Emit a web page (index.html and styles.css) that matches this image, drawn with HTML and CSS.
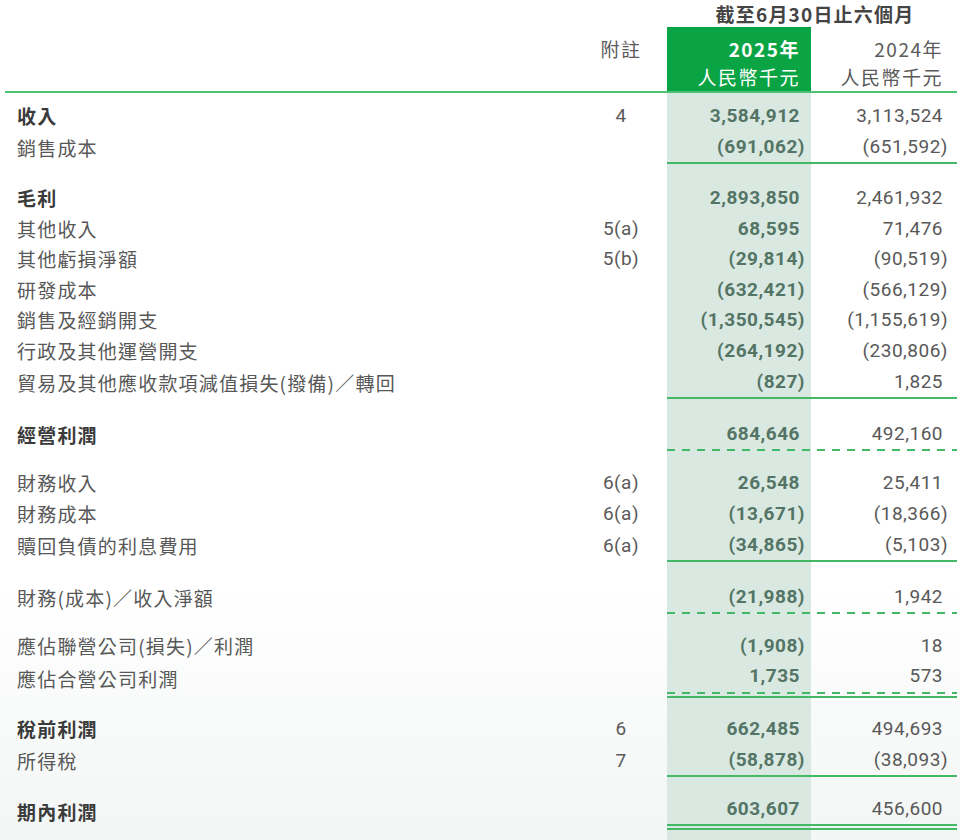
FILE: index.html
```html
<!DOCTYPE html>
<html lang="zh-Hant">
<head>
<meta charset="utf-8">
<title>簡明綜合損益表</title>
<link rel="stylesheet" href="styles.css">
</head>
<body>
<table class="pl">
  <colgroup><col class="c-label"><col class="c-note"><col class="c-cur"><col class="c-prev"></colgroup>
  <thead>
    <tr class="h-period"><th></th><th></th><th colspan="2" class="period">截至6月30日止六個月</th></tr>
    <tr class="h-year"><th></th><th class="note">附註</th><th class="cur b">2025年</th><th class="prev">2024年</th></tr>
    <tr class="h-unit"><th></th><th></th><th class="cur">人民幣千元</th><th class="prev">人民幣千元</th></tr>
  </thead>
  <tbody>
    <tr class="sp sp8"><td></td><td></td><td class="cur"></td><td class="prev"></td></tr>
    <tr><td class="lbl b">收入</td><td class="note">4</td><td class="cur">3,584,912</td><td class="prev">3,113,524</td></tr>
    <tr class="rule"><td class="lbl">銷售成本</td><td class="note"></td><td class="cur"><span class="neg">(691,062)</span></td><td class="prev"><span class="neg">(651,592)</span></td></tr>
    <tr class="sp sp18"><td></td><td></td><td class="cur"></td><td class="prev"></td></tr>
    <tr><td class="lbl b">毛利</td><td class="note"></td><td class="cur">2,893,850</td><td class="prev">2,461,932</td></tr>
    <tr><td class="lbl">其他收入</td><td class="note">5(a)</td><td class="cur">68,595</td><td class="prev">71,476</td></tr>
    <tr><td class="lbl">其他虧損淨額</td><td class="note">5(b)</td><td class="cur"><span class="neg">(29,814)</span></td><td class="prev"><span class="neg">(90,519)</span></td></tr>
    <tr><td class="lbl">研發成本</td><td class="note"></td><td class="cur"><span class="neg">(632,421)</span></td><td class="prev"><span class="neg">(566,129)</span></td></tr>
    <tr><td class="lbl">銷售及經銷開支</td><td class="note"></td><td class="cur"><span class="neg">(1,350,545)</span></td><td class="prev"><span class="neg">(1,155,619)</span></td></tr>
    <tr><td class="lbl">行政及其他運營開支</td><td class="note"></td><td class="cur"><span class="neg">(264,192)</span></td><td class="prev"><span class="neg">(230,806)</span></td></tr>
    <tr class="rule"><td class="lbl">貿易及其他應收款項減值損失(撥備)／轉回</td><td class="note"></td><td class="cur"><span class="neg">(827)</span></td><td class="prev">1,825</td></tr>
    <tr class="sp sp20"><td></td><td></td><td class="cur"></td><td class="prev"></td></tr>
    <tr class="dash"><td class="lbl b">經營利潤</td><td class="note"></td><td class="cur">684,646</td><td class="prev">492,160</td></tr>
    <tr class="sp sp16"><td></td><td></td><td class="cur"></td><td class="prev"></td></tr>
    <tr class="r31"><td class="lbl">財務收入</td><td class="note">6(a)</td><td class="cur">26,548</td><td class="prev">25,411</td></tr>
    <tr class="r31"><td class="lbl">財務成本</td><td class="note">6(a)</td><td class="cur"><span class="neg">(13,671)</span></td><td class="prev"><span class="neg">(18,366)</span></td></tr>
    <tr class="r31 rule"><td class="lbl">贖回負債的利息費用</td><td class="note">6(a)</td><td class="cur"><span class="neg">(34,865)</span></td><td class="prev"><span class="neg">(5,103)</span></td></tr>
    <tr class="sp sp19"><td></td><td></td><td class="cur"></td><td class="prev"></td></tr>
    <tr class="dash"><td class="lbl">財務(成本)／收入淨額</td><td class="note"></td><td class="cur"><span class="neg">(21,988)</span></td><td class="prev">1,942</td></tr>
    <tr class="sp sp17"><td></td><td></td><td class="cur"></td><td class="prev"></td></tr>
    <tr class="r30"><td class="lbl">應佔聯營公司(損失)／利潤</td><td class="note"></td><td class="cur"><span class="neg">(1,908)</span></td><td class="prev">18</td></tr>
    <tr class="r30 dash-rule"><td class="lbl">應佔合營公司利潤</td><td class="note"></td><td class="cur">1,735</td><td class="prev">573</td></tr>
    <tr class="sp sp16"><td></td><td></td><td class="cur"></td><td class="prev"></td></tr>
    <tr><td class="lbl b">稅前利潤</td><td class="note">6</td><td class="cur">662,485</td><td class="prev">494,693</td></tr>
    <tr class="rule"><td class="lbl">所得稅</td><td class="note">7</td><td class="cur"><span class="neg">(58,878)</span></td><td class="prev"><span class="neg">(38,093)</span></td></tr>
    <tr class="sp sp17"><td></td><td></td><td class="cur"></td><td class="prev"></td></tr>
    <tr class="double"><td class="lbl b">期內利潤</td><td class="note"></td><td class="cur">603,607</td><td class="prev">456,600</td></tr>
    <tr class="sp sp12"><td></td><td></td><td class="cur"></td><td class="prev"></td></tr>
  </tbody>
</table>
</body>
</html>
```

FILE: styles.css
```css
html, body {
  margin: 0;
  padding: 0;
}

body {
  min-height: 840px;
  background: linear-gradient(180deg, #ffffff 0%, #ffffff 70%, #f2f6f4 100%);
  font-family: "Noto Sans CJK TC", "Noto Sans", sans-serif;
  color: #555555;
}

.pl {
  margin-left: 5px;
  width: 952px;
  table-layout: fixed;
  border-collapse: separate;
  border-spacing: 0;
}

.c-label { width: 570px; }
.c-note { width: 92px; }
.c-cur { width: 144px; }
.c-prev { width: 146px; }

.pl th,
.pl td {
  padding: 0;
  font-size: 19px;
  font-weight: 400;
  letter-spacing: 1.5px;
  white-space: nowrap;
  line-height: 28px;
  vertical-align: middle;
}

/* header */
.pl .h-period th {
  height: 27px;
  line-height: 27px;
}

.pl .h-period .period {
  text-align: center;
  font-weight: 700;
  color: #444444;
  padding-left: 6px;
  letter-spacing: 1.2px;
}

.pl .h-year th {
  height: 28px;
  padding-top: 8px;
}

.pl .h-unit th {
  height: 28px;
  border-bottom: 2px solid #4dc172;
}

.pl thead .note {
  text-align: center;
  color: #5a5a5a;
}

.pl thead .cur {
  background: #0ba444;
  color: #ffffff;
  text-align: right;
  padding-right: 11px;
}

.pl thead .cur.b {
  font-weight: 700;
}

.pl thead .prev {
  text-align: right;
  padding-right: 14px;
  color: #5a5a5a;
}

/* body */
.pl tbody td {
  height: 30.6px;
}

.pl tbody tr.r31 td { height: 31px; }
.pl tbody tr.r30 td { height: 30.3px; }

.pl tbody tr.sp td { line-height: 0; }
.pl tbody tr.sp8 td { height: 8px; }
.pl tbody tr.sp12 td { height: 12px; }
.pl tbody tr.sp16 td { height: 16px; }
.pl tbody tr.sp17 td { height: 17px; }
.pl tbody tr.sp18 td { height: 18.5px; }
.pl tbody tr.sp19 td { height: 19px; }
.pl tbody tr.sp20 td { height: 20px; }

.pl tbody .lbl {
  text-align: left;
  padding-left: 12px;
  letter-spacing: 1.2px;
  color: #585858;
}

.pl tbody .lbl.b {
  font-weight: 700;
  color: #3b3b3b;
}

.pl tbody .note {
  text-align: center;
  font-family: Roboto, "Noto Sans CJK TC", sans-serif;
  letter-spacing: 0.5px;
  color: #5a5a5a;
}

.pl tbody .cur {
  background-color: #d9e8e1;
  text-align: right;
  padding-right: 11px;
  font-family: Roboto, "Noto Sans CJK TC", sans-serif;
  letter-spacing: 0.5px;
  font-weight: 700;
  color: #547565;
}

.pl tbody .prev {
  text-align: right;
  padding-right: 14px;
  font-family: Roboto, "Noto Sans CJK TC", sans-serif;
  letter-spacing: 0.5px;
  color: #595959;
}

.neg {
  margin-right: -5px;
}

/* rules */
.pl .rule .cur,
.pl .rule .prev {
  border-bottom: 2px solid #43b966;
}

.pl .double .cur,
.pl .double .prev {
  border-bottom: 6px double #43b966;
}

.pl .dash .cur,
.pl .dash .prev {
  border-bottom: 2px solid transparent;
  background-origin: border-box;
  background-repeat: no-repeat;
  background-image: repeating-linear-gradient(90deg, #43b966 0 8px, transparent 8px 15px);
  background-size: calc(100% + 9px) 2px;
  background-position: 0 100%;
}

.pl .dash .prev {
  background-position: -9px 100%;
}

.pl .dash-rule .cur,
.pl .dash-rule .prev {
  border-bottom: 6px solid transparent;
  background-origin: border-box;
  background-repeat: no-repeat;
  background-image:
    linear-gradient(#43b966, #43b966),
    repeating-linear-gradient(90deg, #43b966 0 8px, transparent 8px 15px);
  background-size: 100% 2px, calc(100% + 9px) 2px;
  background-position: 0 100%, 0 calc(100% - 4px);
}

.pl .dash-rule .prev {
  background-position: 0 100%, -9px calc(100% - 4px);
}
```
